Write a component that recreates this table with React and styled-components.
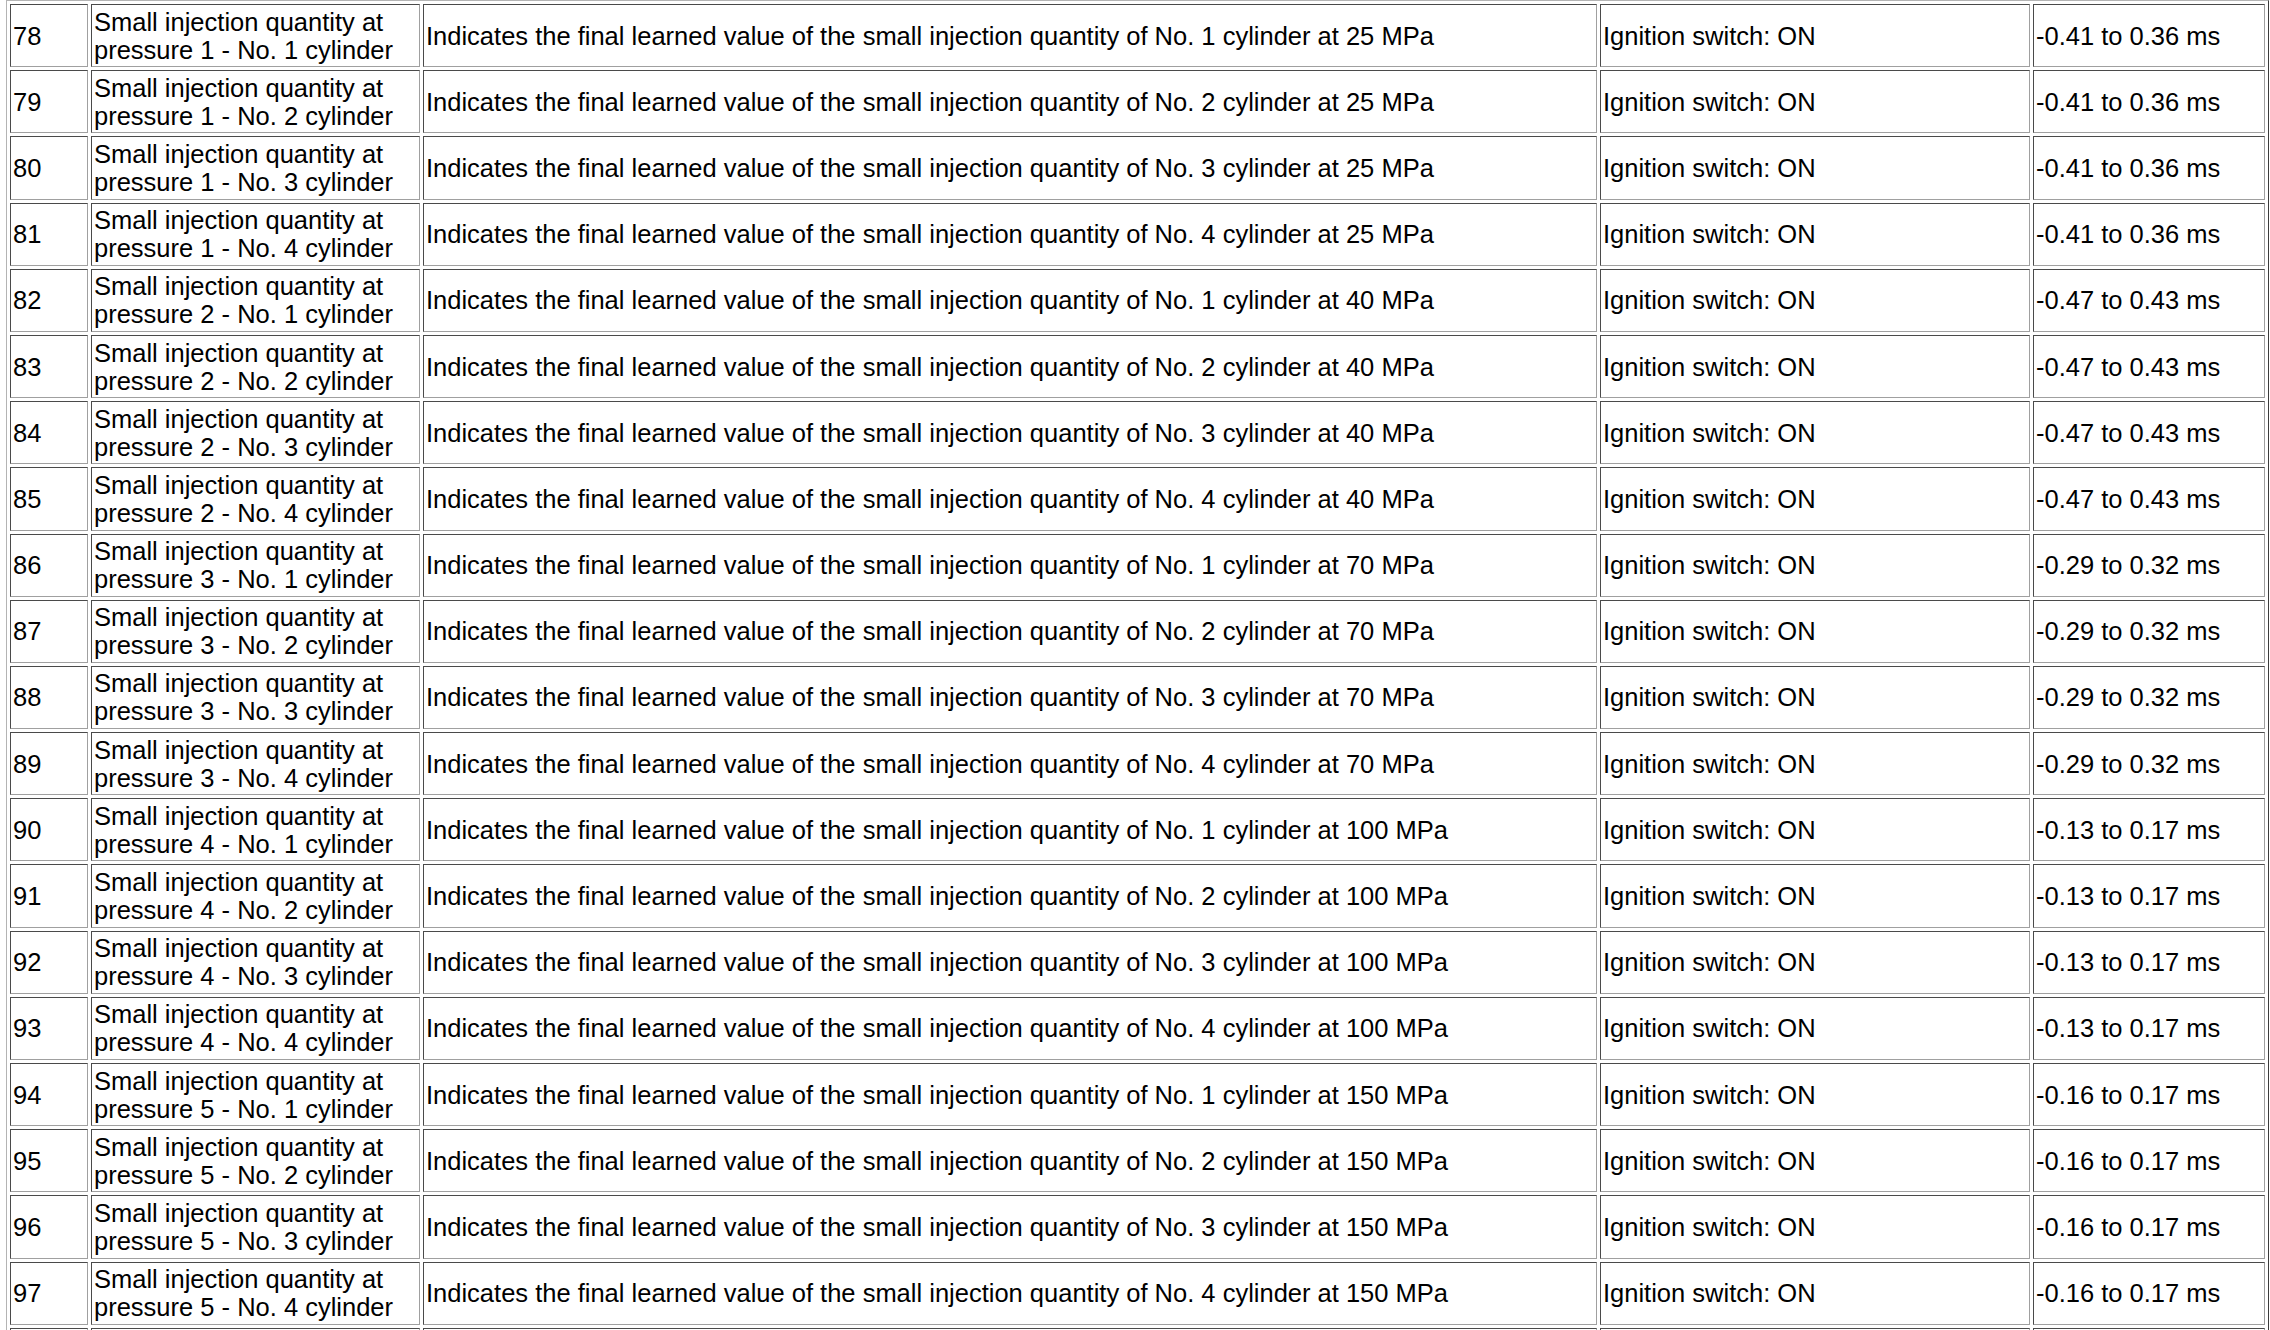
import React from 'react';
import styled, { createGlobalStyle } from 'styled-components';

const GlobalStyle = createGlobalStyle`
 html, body {
  margin: 0;
  padding: 0;
  background: #ffffff;
 }
 body {
  overflow: hidden;
 }
`

const pressures = [
 { level: 1, mpa: 25, range: '-0.41 to 0.36 ms' },
 { level: 2, mpa: 40, range: '-0.47 to 0.43 ms' },
 { level: 3, mpa: 70, range: '-0.29 to 0.32 ms' },
 { level: 4, mpa: 100, range: '-0.13 to 0.17 ms' },
 { level: 5, mpa: 150, range: '-0.16 to 0.17 ms' },
];

const rows = [];
pressures.forEach((p, pi) => {
 [1, 2, 3, 4].forEach((cyl, ci) => {
  rows.push({
   no: 78 + pi * 4 + ci,
   item: `Small injection quantity at pressure ${p.level} - No. ${cyl} cylinder`,
   desc: `Indicates the final learned value of the small injection quantity of No. ${cyl} cylinder at ${p.mpa} MPa`,
   cond: 'Ignition switch: ON',
   range: p.range,
  });
 });
});

const columns = [78, 329, 1174, 430, 232];

const App = () => {
 return (
  <Page>
   <GlobalStyle />
   <DataTable>
    <colgroup>
     {columns.map((w, i) => <Col key={i} $width={w} />)}
    </colgroup>
    <tbody>
     {rows.map((r) => (
      <Row key={r.no}>
       <Cell>{r.no}</Cell>
       <Cell>{r.item}</Cell>
       <Cell>{r.desc}</Cell>
       <Cell>{r.cond}</Cell>
       <Cell>{r.range}</Cell>
      </Row>
     ))}
     <Row>
      {columns.map((w, i) => <Cell key={i} />)}
     </Row>
    </tbody>
   </DataTable>
  </Page>
 )
}

export default App;

const Page = styled.div`
 height: 1330px;
 overflow: hidden;
 padding-left: 6px;
 box-sizing: border-box;
`
const DataTable = styled.table`
 table-layout: fixed;
 width: 2263px;
 border-collapse: separate;
 border-spacing: 3px;
 border-style: solid;
 border-width: 1px;
 border-color: #b4b4b4 #3c3c3c #3c3c3c #b4b4b4;
 font-family: "Liberation Sans", Arial, sans-serif;
 font-size: 25.5px;
 color: #000000;
`
const Col = styled.col`
 width: ${(props) => props.$width}px;
`
const Row = styled.tr`
 height: 63.2px;
`
const Cell = styled.td`
 box-sizing: border-box;
 padding: 0 2px;
 vertical-align: middle;
 line-height: 28px;
 border-style: solid;
 border-width: 1px;
 border-color: #4a4a4a #a0a0a0 #a0a0a0 #4a4a4a;
`
